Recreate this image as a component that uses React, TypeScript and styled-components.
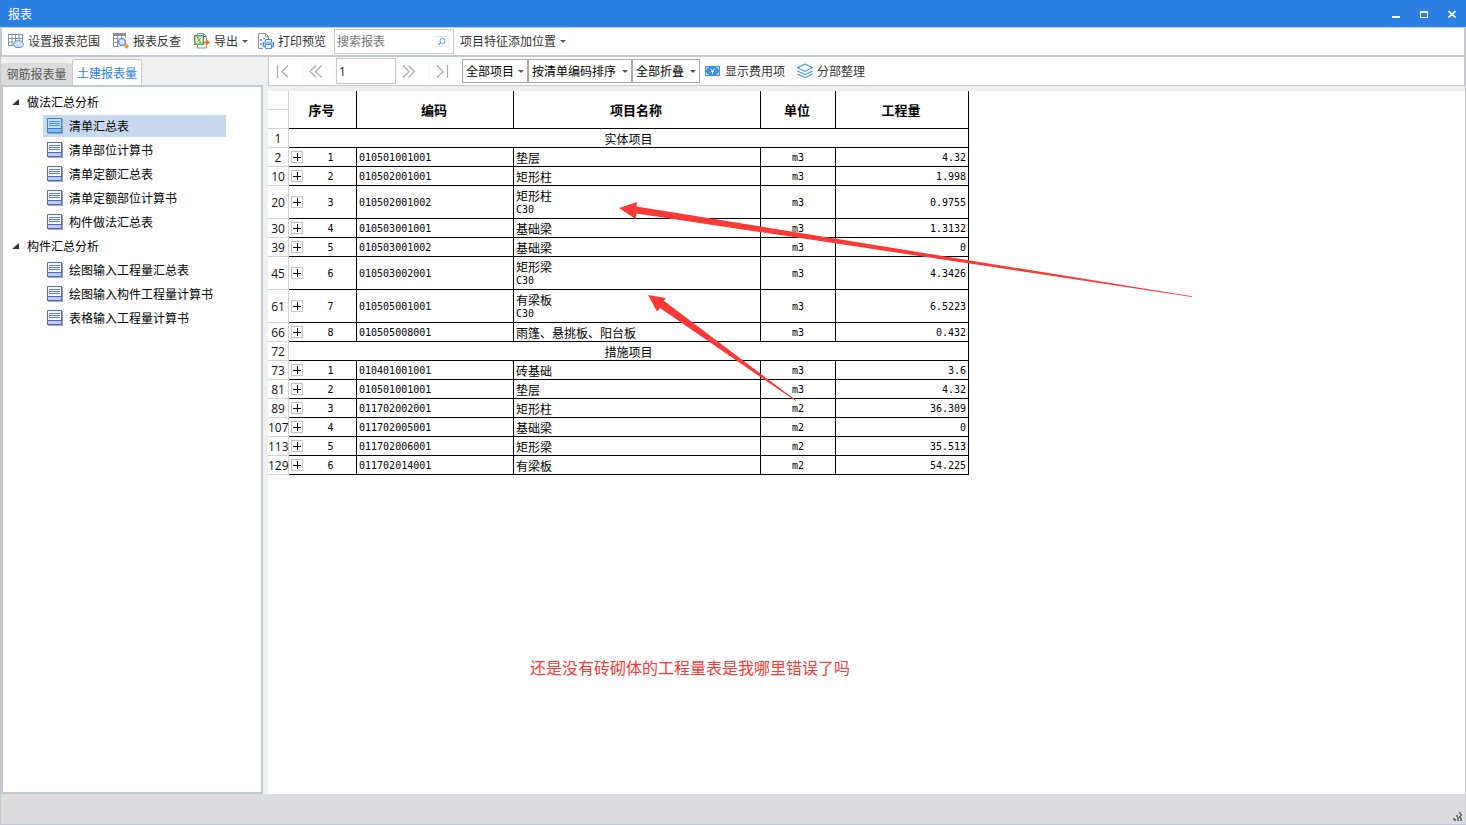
import React, { useState } from "react";
import styled, { createGlobalStyle } from "styled-components";

const line = "#c5c9ce";
const blue = "#2b80e2";

const GlobalStyle = createGlobalStyle`
  *, *::before, *::after { box-sizing: border-box; }
  body {
    margin: 0;
    background: #f0f0f0;
    color: #000;
    font: 12px/16px "Noto Sans CJK SC", sans-serif;
  }
  button, input, select { font: inherit; color: inherit; margin: 0; }
  ul { list-style: none; margin: 0; padding: 0; }
`;

const Window = styled.div`
  display: flex;
  flex-direction: column;
  min-height: 100vh;
  border: 1px solid #c0c8d4;
  border-top: 0;
`;

const TitleBar = styled.header`
  display: flex;
  align-items: center;
  justify-content: space-between;
  height: 28px;
  margin: 0 -1px;
  padding: 0 6px 0 8px;
  border-bottom: 1px solid #bcd0ea;
  background: ${blue};
  color: #fff;
`;

const Title = styled.h1`
  margin: 0;
  font-size: 12px;
  font-weight: 400;
`;

const WindowButtons = styled.div`
  display: flex;
  gap: 12px;
`;

const WindowButton = styled.button`
  display: flex;
  padding: 4px;
  border: 0;
  background: none;
`;

const MainToolbar = styled.div`
  display: flex;
  align-items: center;
  gap: 1px;
  height: 29px;
  padding: 0 2px 1px 1px;
  border: 1px solid ${line};
  border-width: 0 1px 2px;
  background: #fff;
`;

const ToolButton = styled.button<{ $tight?: boolean }>`
  display: flex;
  align-items: center;
  gap: 4px;
  height: 24px;
  padding: 0 ${(p) => (p.$tight ? 3 : 6)}px 0 4px;
  border: 1px solid #fafafa;
  border-radius: 3px;
  background: none;
  color: #333;
  white-space: nowrap;
`;

const SearchBox = styled.label`
  display: flex;
  align-items: center;
  width: 120px;
  height: 25px;
  padding: 0 4px 0 2px;
  border: 1px solid #c6c9cd;
`;

const SearchInput = styled.input`
  flex: 1;
  min-width: 0;
  padding: 0;
  border: 0;
  outline: 0;
  &::placeholder { color: #757575; opacity: 1; }
`;

const Body = styled.div`
  display: flex;
  flex: 1;
  gap: 5px;
`;

const Sidebar = styled.aside`
  display: flex;
  flex-direction: column;
  flex: 0 0 262px;
`;

const Tabs = styled.div`
  display: flex;
  align-items: flex-end;
  height: 28px;
  padding-top: 3px;
`;

const Tab = styled.button<{ $active?: boolean }>`
  height: ${(p) => (p.$active ? 26 : 22)}px;
  width: ${(p) => (p.$active ? 70 : 71)}px;
  padding: 0;
  border: ${(p) => (p.$active ? `1px solid ${line}` : "0")};
  border-bottom: 0;
  border-radius: 3px 3px 0 0;
  background: ${(p) => (p.$active ? "#fff" : "#dcdcdc")};
  color: ${(p) => (p.$active ? blue : "#555")};
`;

const TreePanel = styled.nav`
  flex: 1;
  padding: 3px 0;
  border: 2px solid #c3c8cc;
  background: #fff;
`;

const GroupButton = styled.button`
  display: flex;
  align-items: center;
  gap: 8px;
  height: 24px;
  padding: 0 0 0 9px;
  border: 0;
  background: none;
`;

const TreeRow = styled.li`
  display: flex;
  align-items: center;
  height: 24px;
  padding-left: 40px;
`;

const TreeItem = styled.button<{ $active?: boolean }>`
  display: flex;
  align-items: center;
  gap: 6px;
  width: 183px;
  height: 22px;
  padding: 0 0 0 4px;
  border: 0;
  background: ${(p) => (p.$active ? "#c8d8ef" : "none")};
  white-space: nowrap;
`;

const Content = styled.main`
  display: flex;
  flex-direction: column;
  flex: 1;
  gap: 5px;
  min-width: 0;
`;

const ReportToolbar = styled.div`
  display: flex;
  align-items: center;
  height: 29px;
  padding: 0 2px 0 1px;
  border: 1px solid ${line};
  border-top: 0;
  background: #fff;
`;

const PagerButton = styled.button`
  display: flex;
  align-items: center;
  justify-content: center;
  width: 33px;
  height: 24px;
  padding: 0 8px 0 0;
  border: 1px solid #fafafa;
  border-radius: 3px;
  background: none;
`;

const PageInput = styled.input`
  width: 60px;
  height: 26px;
  padding: 0 2px;
  border: 1px solid ${line};
  outline: 0;
  color: #222;
  font: 12px/16px "Open Sans", sans-serif;
`;

const Filters = styled.div`
  display: flex;
`;

const SelectWrap = styled.span<{ $width: number }>`
  display: grid;
  grid-template-columns: 1fr 12px;
  align-items: center;
  width: ${(p) => p.$width}px;
  height: 24px;
  border: 1px solid #aaa;
  svg { grid-area: 1 / 2; justify-self: center; pointer-events: none; }
`;

const Select = styled.select`
  grid-area: 1 / 1 / 2 / 3;
  appearance: none;
  width: 100%;
  height: 22px;
  padding: 0 0 0 3px;
  border: 0;
  outline: 0;
  background: none;
`;

const Report = styled.section`
  position: relative;
  flex: 1;
  background: #fff;
`;

const Table = styled.table`
  width: 701px;
  table-layout: fixed;
  border-collapse: separate;
  border-spacing: 0;
`;

const HeadCell = styled.th`
  padding: 0 2px 0 0;
  border: solid #000;
  border-width: 0 1px 1px 0;
  font-size: 13px;
  font-weight: 700;
`;

const RowNumber = styled.th`
  height: 19px;
  padding: 2px 0 0;
  border: solid #d2d2d2;
  border-width: 0 1px 1px 0;
  color: #111;
  font: 12px/14px "Open Sans", sans-serif;
  white-space: nowrap;
`;

const Cell = styled.td<{ $align?: "left" | "center" | "right"; $open?: boolean }>`
  padding: ${(p) => (p.$open ? 0 : 1)}px 2px 0;
  border: solid #000;
  border-width: 0 ${(p) => (p.$open ? 0 : 1)}px 1px 0;
  font-family: "DejaVu Sans Mono", "Noto Sans CJK SC", monospace;
  font-size: 10px;
  line-height: 14px;
  text-align: ${(p) => p.$align ?? "left"};
`;

const NameText = styled.div`
  font: 12px/14px "Noto Sans CJK SC", sans-serif;
`;

const Row = styled.tr<{ $tall?: boolean }>`
  height: ${(p) => (p.$tall ? 33 : 19)}px;
`;

const ExpandButton = styled.button`
  display: flex;
  width: 12px;
  height: 12px;
  margin-bottom: 1px;
  padding: 1px;
  border: 1px solid #c4c4c4;
  background: #fff;
`;

const Arrows = styled.svg`
  position: absolute;
  top: 0;
  left: 0;
  pointer-events: none;
`;

const Note = styled.p`
  position: absolute;
  top: 564px;
  left: 262px;
  margin: 0;
  color: #fb3a38;
  font-size: 16px;
  line-height: 24px;
  white-space: nowrap;
`;

const StatusBar = styled.footer`
  display: flex;
  align-items: flex-end;
  justify-content: flex-end;
  height: 30px;
  padding: 3px;
  background: #dddddf;
`;

const Caret = () => (
  <svg width="6" height="16" viewBox="0 0 6 16"><path d="M0 7h6l-3 3z" fill="#555" /></svg>
);

const RangeIcon = () => (
  <svg width="16" height="16" viewBox="0 0 16 16" fill="none">
    <path d="M0.5 1.500h14v8M.5 1.500v11h5M.5 5.500h14M.5 9h6M4 1.500v11M7.500 1.500V8M11 1.500V7" stroke="#87939d" />
    <path d="M7 9.500C7 7 14 7 14.500 9.500c1.500.500 1.500 2 .5 2.500 0 2-2 3-4 2.500-3 .500-5-.5-5-2.500-1-.5-.5-2 1-2.500z" fill="#cfe2fa" stroke="#4b90dd" />
  </svg>
);

const CheckIcon = () => (
  <svg width="16" height="16" viewBox="0 0 16 16" fill="none">
    <path d="M.5 1v12.500H6M.5 5.500h5M.5 9.500h4M4.500 3v10.500M8.500 3v2M12.500 3v2" stroke="#87939d" />
    <path d="M0 0h13v3H0z" fill="#87939d" />
    <circle cx="9" cy="9" r="3.500" fill="#dceafe" stroke="#7590d0" strokeWidth="1.500" />
    <path d="M13.500 10.500l2.500 3-2.500 2.500-2.500-2.500z" fill="#f39b13" />
  </svg>
);

const ExportIcon = () => (
  <svg width="16" height="16" viewBox="0 0 16 16" fill="none">
    <path d="M3.500 2V.5h6l3 3V8M3.500 12v3h9v-2M9.500.5v3h3" stroke="#87939d" />
    <path d="M.75 2.750h8.500v8.500H.75z" fill="#fff" stroke="#58a53b" strokeWidth="1.500" />
    <path d="M3 4.500l4 5M7 4.500l-4 5M3 4.500h2M5 9.500h2" stroke="#58a53b" />
    <path d="M10 8.500h2V6l4 3.500-4 3.500v-2.500h-2z" fill="#f06a1d" />
  </svg>
);

const PrintIcon = () => (
  <svg width="16" height="16" viewBox="0 0 16 16" fill="none">
    <path d="M5 15.500H.5V.5h7l3 3V6M7.500.5v3h3" stroke="#87939d" />
    <path d="M2 6h2v2H2zM5 5h2v1H5zM2 10h2v2H2z" fill="#87939d" />
    <path d="M7.500 9V6.500h6V9" stroke="#3f8de5" />
    <path d="M5.500 13.500v-4h10v4h-2M5.500 13.500h2" stroke="#3f8de5" strokeWidth="1.500" />
    <path d="M6 9h9v2H6z" fill="#8dbdf2" />
    <path d="M7.500 11.500h6v4h-6z" fill="#fff" stroke="#3f8de5" />
  </svg>
);

const SearchIcon = () => (
  <svg width="15" height="11" viewBox="0 0 15 11" fill="none">
    <path d="M0 .5h14.500v10H0" stroke="#e9edf2" />
    <circle cx="8.500" cy="5" r="2.500" stroke="#5aa2ea" />
    <path d="M6.700 7L4.500 9" stroke="#5aa2ea" strokeWidth="1.200" />
  </svg>
);

const SheetIcon = ({ active }: { active?: boolean }) => (
  <svg width="16" height="16" viewBox="0 0 16 16" shapeRendering="crispEdges">
    <path d="M1 1h15v15H1z" fill="#a5a5a5" />
    <path d="M0 0h15v15H0z" fill={active ? "#3a7fd5" : "#4f6cc4"} />
    <path d="M1 1h13v9H1z" fill={active ? "#bfe0ff" : "#fff"} />
    <path d="M1 11h13v3H1z" fill={active ? "#86bdfb" : "#b9cbfb"} />
    <path d="M2 3h11v1H2zM2 5h11v1H2zM2 7h11v1H2z" fill={active ? "#4b91e2" : "#5a78cf"} />
  </svg>
);

const PagerIcon = ({ kind }: { kind: "first" | "prev" | "next" | "last" }) => {
  const paths = {
    first: "M1.500 1v13M12 1.500L6 7.500l6 6",
    prev: "M7 1.500l-6 6 6 6M12.500 1.500l-6 6 6 6",
    next: "M1 1.500l6 6-6 6M6.500 1.500l6 6-6 6",
    last: "M2 1.500l6 6-6 6M12.500 1v13",
  };
  return (
    <svg width="14" height="15" viewBox="0 0 14 15" fill="none">
      <path d={paths[kind]} stroke="#aaa" strokeWidth="1.200" />
    </svg>
  );
};

const MoneyIcon = () => (
  <svg width="16" height="16" viewBox="0 0 16 16">
    <path d="M0 3h15v10H0z" fill="#4391e6" />
    <path d="M1.500 6.500v-2h2M11.500 4.500h2v2M1.500 9.500v2h2M11.500 11.500h2v-2M5.500 5.500l2 2.500 2-2.500M7.500 8v3M6 8.500h3" fill="none" stroke="#fff" strokeWidth=".8" />
  </svg>
);

const LayersIcon = () => (
  <svg width="16" height="16" viewBox="0 0 16 16" fill="none" stroke="#4391e6" strokeWidth="1.100">
    <path d="M8 1l7.500 3.700L8 8.500.5 4.700zM.5 8L8 11.700 15.500 8M.5 11L8 14.700 15.500 11" />
  </svg>
);

const tree = [
  { name: "做法汇总分析", items: ["清单汇总表", "清单部位计算书", "清单定额汇总表", "清单定额部位计算书", "构件做法汇总表"] },
  { name: "构件汇总分析", items: ["绘图输入工程量汇总表", "绘图输入构件工程量计算书", "表格输入工程量计算书"] },
];

type Line = { no: number; section?: string; seq?: number; code?: string; name?: string; spec?: string; unit?: string; qty?: string };

const lines: Line[] = [
  { no: 1, section: "实体项目" },
  { no: 2, seq: 1, code: "010501001001", name: "垫层", unit: "m3", qty: "4.32" },
  { no: 10, seq: 2, code: "010502001001", name: "矩形柱", unit: "m3", qty: "1.998" },
  { no: 20, seq: 3, code: "010502001002", name: "矩形柱", spec: "C30", unit: "m3", qty: "0.9755" },
  { no: 30, seq: 4, code: "010503001001", name: "基础梁", unit: "m3", qty: "1.3132" },
  { no: 39, seq: 5, code: "010503001002", name: "基础梁", unit: "m3", qty: "0" },
  { no: 45, seq: 6, code: "010503002001", name: "矩形梁", spec: "C30", unit: "m3", qty: "4.3426" },
  { no: 61, seq: 7, code: "010505001001", name: "有梁板", spec: "C30", unit: "m3", qty: "6.5223" },
  { no: 66, seq: 8, code: "010505008001", name: "雨篷、悬挑板、阳台板", unit: "m3", qty: "0.432" },
  { no: 72, section: "措施项目" },
  { no: 73, seq: 1, code: "010401001001", name: "砖基础", unit: "m3", qty: "3.6" },
  { no: 81, seq: 2, code: "010501001001", name: "垫层", unit: "m3", qty: "4.32" },
  { no: 89, seq: 3, code: "011702002001", name: "矩形柱", unit: "m2", qty: "36.309" },
  { no: 107, seq: 4, code: "011702005001", name: "基础梁", unit: "m2", qty: "0" },
  { no: 113, seq: 5, code: "011702006001", name: "矩形梁", unit: "m2", qty: "35.513" },
  { no: 129, seq: 6, code: "011702014001", name: "有梁板", unit: "m2", qty: "54.225" },
];

const filters = [
  { label: "项目范围", value: "全部项目", width: 66 },
  { label: "排序方式", value: "按清单编码排序", width: 104 },
  { label: "折叠方式", value: "全部折叠", width: 68 },
];

export default function App() {
  const [selected, setSelected] = useState("清单汇总表");
  return (
    <Window>
      <GlobalStyle />
      <TitleBar>
        <Title>报表</Title>
        <WindowButtons>
          <WindowButton aria-label="最小化">
            <svg width="8" height="8"><path d="M0 6h8v2H0z" fill="#fff" /></svg>
          </WindowButton>
          <WindowButton aria-label="最大化">
            <svg width="8" height="8" shapeRendering="crispEdges"><path d="M0 1h8v7H0zM1 3v4h6V3z" fill="#fff" fillRule="evenodd" /></svg>
          </WindowButton>
          <WindowButton aria-label="关闭">
            <svg width="8" height="8"><path d="M.5 1l7 6.500M7.500 1l-7 6.500" stroke="#fff" strokeWidth="1.600" /></svg>
          </WindowButton>
        </WindowButtons>
      </TitleBar>

      <MainToolbar>
        <ToolButton><RangeIcon />设置报表范围</ToolButton>
        <ToolButton><CheckIcon />报表反查</ToolButton>
        <ToolButton $tight><ExportIcon />导出<Caret /></ToolButton>
        <ToolButton><PrintIcon />打印预览</ToolButton>
        <SearchBox>
          <SearchInput placeholder="搜索报表" aria-label="搜索报表" />
          <SearchIcon />
        </SearchBox>
        <ToolButton>项目特征添加位置<Caret /></ToolButton>
      </MainToolbar>

      <Body>
        <Sidebar>
          <Tabs>
            <Tab>钢筋报表量</Tab>
            <Tab $active>土建报表量</Tab>
          </Tabs>
          <TreePanel>
            <ul>
              {tree.map((group) => (
                <li key={group.name}>
                  <GroupButton>
                    <svg width="7" height="7"><path d="M7 0v6H0z" fill="#333" /></svg>
                    {group.name}
                  </GroupButton>
                  <ul>
                    {group.items.map((item) => (
                      <TreeRow key={item}>
                        <TreeItem $active={item === selected} onClick={() => setSelected(item)}>
                          <SheetIcon active={item === selected} />
                          {item}
                        </TreeItem>
                      </TreeRow>
                    ))}
                  </ul>
                </li>
              ))}
            </ul>
          </TreePanel>
        </Sidebar>

        <Content>
          <ReportToolbar>
            <PagerButton aria-label="第一页"><PagerIcon kind="first" /></PagerButton>
            <PagerButton aria-label="上一页"><PagerIcon kind="prev" /></PagerButton>
            <PageInput aria-label="页码" defaultValue="1" />
            <PagerButton aria-label="下一页"><PagerIcon kind="next" /></PagerButton>
            <PagerButton aria-label="最后一页"><PagerIcon kind="last" /></PagerButton>
            <Filters>
              {filters.map((f) => (
                <SelectWrap key={f.label} $width={f.width}>
                  <Select aria-label={f.label}><option>{f.value}</option></Select>
                  <Caret />
                </SelectWrap>
              ))}
            </Filters>
            <ToolButton><MoneyIcon />显示费用项</ToolButton>
            <ToolButton><LayersIcon />分部整理</ToolButton>
          </ReportToolbar>

          <Report>
            <Table>
              <colgroup>
                <col style={{ width: 21 }} />
                <col style={{ width: 16 }} />
                <col style={{ width: 52 }} />
                <col style={{ width: 157 }} />
                <col style={{ width: 247 }} />
                <col style={{ width: 75 }} />
                <col style={{ width: 133 }} />
              </colgroup>
              <thead>
                <Row>
                  <RowNumber as="td" />
                  <HeadCell rowSpan={2} colSpan={2}>序号</HeadCell>
                  <HeadCell rowSpan={2}>编码</HeadCell>
                  <HeadCell rowSpan={2}>项目名称</HeadCell>
                  <HeadCell rowSpan={2}>单位</HeadCell>
                  <HeadCell rowSpan={2}>工程量</HeadCell>
                </Row>
                <Row><RowNumber as="td" /></Row>
              </thead>
              <tbody>
                {lines.map((l) => (
                  <Row key={l.no} $tall={!!l.spec}>
                    <RowNumber scope="row">{l.no}</RowNumber>
                    {l.section ? (
                      <Cell colSpan={6} $align="center"><NameText>{l.section}</NameText></Cell>
                    ) : (
                      <>
                        <Cell $open><ExpandButton aria-label="展开">
                          <svg width="8" height="8" shapeRendering="crispEdges"><path d="M0 4h8v1H0zM4 0h1v8H4z" fill="#000" /></svg>
                        </ExpandButton></Cell>
                        <Cell $align="center">{l.seq}</Cell>
                        <Cell>{l.code}</Cell>
                        <Cell><NameText>{l.name}</NameText>{l.spec}</Cell>
                        <Cell $align="center">{l.unit}</Cell>
                        <Cell $align="right">{l.qty}</Cell>
                      </>
                    )}
                  </Row>
                ))}
              </tbody>
            </Table>
            <Arrows width="930" height="320" viewBox="0 0 930 320" fill="#fb3a38" aria-hidden="true">
              <path d="M351 117l18-6-.5 4.500L924 205.300v.7l-555.500-83.500-1 5.500z" />
              <path d="M380 204l18 3-2.500 2.500L528 309.300l-.5.7L392 217l-3 3.500z" />
            </Arrows>
            <Note>还是没有砖砌体的工程量表是我哪里错误了吗</Note>
          </Report>
        </Content>
      </Body>

      <StatusBar>
        <svg width="9" height="9" viewBox="0 0 9 9" shapeRendering="crispEdges" fill="#6f7680">
          <path d="M6 0h2v2H6zM7 2h2v2H7zM3 3h2v2H3zM6 4h2v2H6zM4 5h2v2H4zM0 6h2v2H0zM1 7h2v2H1zM4 7h2v2H4zM7 6h2v3H7z" />
        </svg>
      </StatusBar>
    </Window>
  );
}
